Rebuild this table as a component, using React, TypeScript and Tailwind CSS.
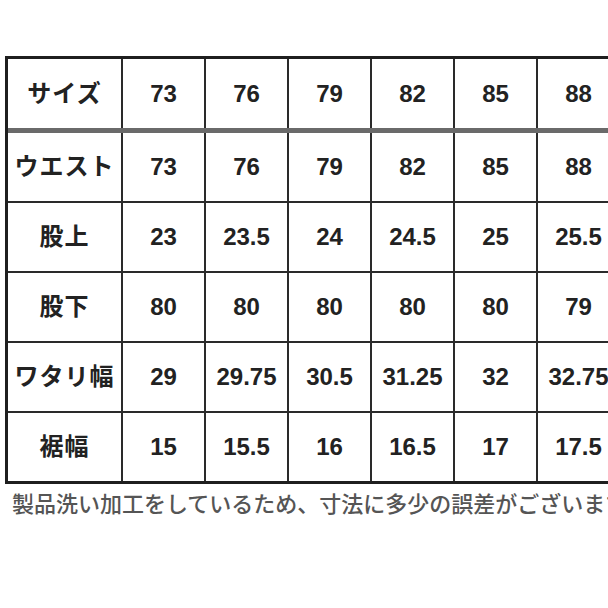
const HEADERS = ["73", "76", "79", "82", "85", "88"];

const ROWS: { label: string; values: string[] }[] = [
  { label: "ウエスト", values: ["73", "76", "79", "82", "85", "88"] },
  { label: "股上", values: ["23", "23.5", "24", "24.5", "25", "25.5"] },
  { label: "股下", values: ["80", "80", "80", "80", "80", "79"] },
  { label: "ワタリ幅", values: ["29", "29.75", "30.5", "31.25", "32", "32.75"] },
  { label: "裾幅", values: ["15", "15.5", "16", "16.5", "17", "17.5"] },
];

const FONT = {
  fontFamily: '"Liberation Sans", "Noto Sans CJK JP", Arial, sans-serif',
};

function Row({
  label,
  values,
  rowClass,
}: {
  label: string;
  values: string[];
  rowClass: string;
}) {
  return (
    <div className={`flex ${rowClass}`}>
      <div className="w-[115px] shrink-0 flex items-center justify-center border-r-2 border-[#2a2a2a] text-[24px] font-bold tracking-[1px]">
        {label}
      </div>
      {values.map((v, i) => (
        <div
          key={i}
          className="w-[83px] shrink-0 flex items-center justify-center border-r-2 border-[#2a2a2a] text-[24px] font-bold"
        >
          {v}
        </div>
      ))}
    </div>
  );
}

export default function App() {
  return (
    <div
      className="w-[608px] h-[608px] overflow-hidden bg-white text-[#222]"
      style={FONT}
    >
      <div className="pt-[56px] pl-[5px]">
        {/* size table, runs past the right edge */}
        <div className="w-[620px] border-[3px] border-r-0 border-[#1f1f1f]">
          <Row
            label="サイズ"
            values={HEADERS}
            rowClass="h-[74px] border-b-[5px] border-[#6a6a6a]"
          />
          {ROWS.map((r, i) => (
            <Row
              key={r.label}
              label={r.label}
              values={r.values}
              rowClass={
                i === ROWS.length - 1
                  ? "h-[68px]"
                  : "h-[70px] border-b-2 border-[#2a2a2a]"
              }
            />
          ))}
        </div>

        {/* note, cut at the right edge like the source image */}
        <p className="mt-[7px] ml-[7px] whitespace-nowrap text-[22px] leading-[28px] text-[#555] font-medium">
          製品洗い加工をしているため、寸法に多少の誤差がございます。
        </p>
      </div>
    </div>
  );
}
